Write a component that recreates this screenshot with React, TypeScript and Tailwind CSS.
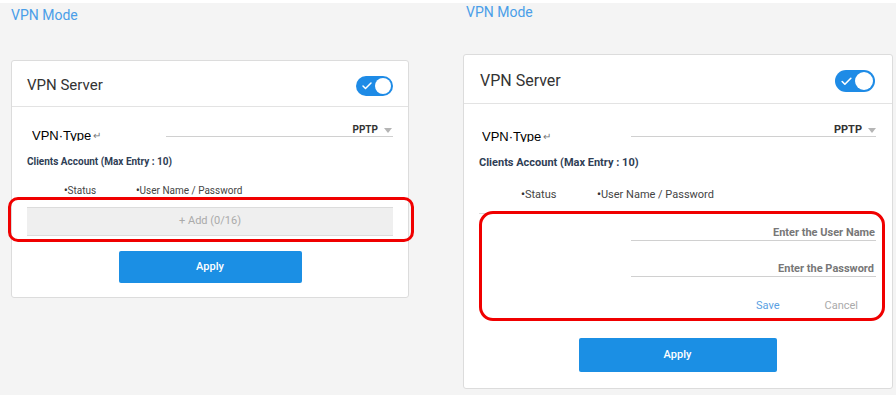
import { Check } from 'lucide-react';

// Toggle switch (on state)
function Toggle({ big }: { big?: boolean }) {
  return (
    <div
      className={`flex items-center justify-between rounded-full bg-[#1e8be6] p-[2px] ${
        big ? 'h-[22px] w-[40px]' : 'h-[20px] w-[37px]'
      }`}
    >
      <Check className={`text-white ${big ? 'ml-[3px] h-[13px] w-[13px]' : 'ml-[3px] h-[12px] w-[12px]'}`} strokeWidth={3} />
      <div className={`rounded-full bg-white ${big ? 'h-[18px] w-[18px]' : 'h-[16px] w-[16px]'}`} />
    </div>
  );
}

function TypeLabel({ className }: { className?: string }) {
  return (
    <div
      className={`flex h-[12px] items-start overflow-hidden text-[13px] leading-[13px] text-black ${className ?? ''}`}
      style={{ fontFamily: '"Liberation Sans", Arial, sans-serif' }}
    >
      VPN·Type<span className="ml-[2px] text-[10px] text-[#777]">↵</span>
    </div>
  );
}

function Caret() {
  return <div className="h-0 w-0 border-x-[4px] border-t-[5px] border-x-transparent border-t-[#b5b5b5]" />;
}

export default function App() {
  return (
    <div
      className="flex h-[395px] w-[896px] overflow-hidden bg-white pt-[3px]"
      style={{ fontFamily: 'Roboto, "Noto Sans", sans-serif' }}
    >
      {/* Left screenshot: collapsed list */}
      <div className="relative flex w-[450px] flex-col bg-[#f4f4f4] pl-[11px]">
        <div className="mt-[2px] text-[14px] leading-[20px] text-[#4a9ee8]">VPN Mode</div>

        <div className="mt-[35px] flex w-[398px] flex-col rounded-[3px] border border-[#dcdcdc] bg-white">
          <div className="flex h-[46px] items-center justify-between border-b border-[#e3e3e3] pl-[15px] pr-[15px] pt-[4px]">
            <span className="text-[15px] text-[#333]">VPN Server</span>
            <Toggle />
          </div>

          <div className="flex flex-col px-[15px] pb-[14px]">
            <div className="mt-[20px] flex h-[14px] items-start justify-between">
              <TypeLabel className="ml-[5px] mt-[2px]" />
              <div className="flex h-[10px] w-[227px] items-end justify-end gap-[6px] border-b border-[#d0d0d0] pr-[1px]">
                <span className="mb-[1px] text-[10px] font-bold leading-[10px] text-[#333]">PPTP</span>
                <div className="mb-[3px]">
                  <Caret />
                </div>
              </div>
            </div>

            <div className="mt-[15px] text-[10px] font-bold leading-[12px] text-[#2f3e55]">
              Clients Account (Max Entry : 10)
            </div>

            <div className="mt-[17px] flex pl-[37px] text-[10px] leading-[12px] text-[#444]">
              <span className="w-[72px]">
                <b className="text-[#333]">•</b>Status
              </span>
              <span>
                <b className="text-[#333]">•</b>User Name / Password
              </span>
            </div>

            <div className="mt-[10px] flex h-[29px] items-center justify-center border-y border-[#dcdcdc] bg-[#efefef] text-[11px] text-[#aaa]">
              + Add (0/16)
            </div>

            <button className="mt-[15px] h-[32px] w-[183px] self-center rounded-[2px] bg-[#1b8fe4] text-[11px] font-medium text-white">
              Apply
            </button>
          </div>
        </div>

        <div className="absolute left-[8px] top-[194px] h-[45px] w-[406px] rounded-[10px] border-[3px] border-[#f00000]" />
      </div>

      {/* Right screenshot: adding a user */}
      <div className="relative flex w-[446px] flex-col bg-[#f4f4f4] pl-[13px]">
        <div className="ml-[3px] mt-0 text-[14px] leading-[18px] text-[#4a9ee8]">VPN Mode</div>

        <div className="mt-[33px] flex w-[430px] flex-col rounded-[3px] border border-[#dcdcdc] bg-white">
          <div className="flex h-[49px] items-center justify-between border-b border-[#e3e3e3] pl-[16px] pr-[17px] pt-[4px]">
            <span className="text-[16px] text-[#333]">VPN Server</span>
            <Toggle big />
          </div>

          <div className="flex flex-col pb-[16px] pl-[15px] pr-[16px]">
            <div className="mt-[23px] flex h-[14px] items-start justify-between">
              <TypeLabel className="ml-[3px] mt-[3px]" />
              <div className="flex h-[10px] w-[245px] items-end justify-end gap-[6px] border-b border-[#d0d0d0]">
                <span className="mb-[1px] text-[11px] font-bold leading-[10px] text-[#333]">PPTP</span>
                <div className="mb-[3px]">
                  <Caret />
                </div>
              </div>
            </div>

            <div className="mt-[15px] text-[11px] font-bold leading-[13px] text-[#2f3e55]">
              Clients Account (Max Entry : 10)
            </div>

            <div className="mt-[19px] flex pl-[42px] text-[11px] leading-[13px] text-[#444]">
              <span className="w-[76px]">
                <b className="text-[#333]">•</b>Status
              </span>
              <span>
                <b className="text-[#333]">•</b>User Name / Password
              </span>
            </div>

            <div className="mt-[12px] flex flex-col border-t border-[#dcdcdc]">
              <div className="mt-[12px] h-[15px] w-[245px] self-end border-b border-[#d0d0d0] pr-[1px] text-right text-[11px] font-bold leading-[13px] text-[#777]">
                Enter the User Name
              </div>
              <div className="mt-[21px] h-[15px] w-[245px] self-end border-b border-[#d0d0d0] pr-[2px] text-right text-[11px] font-bold leading-[13px] text-[#777]">
                Enter the Password
              </div>
              <div className="mt-[22px] flex justify-end gap-[45px] pr-[18px] text-[11px] leading-[13px]">
                <span className="text-[#5a9fe3]">Save</span>
                <span className="text-[#aaa]">Cancel</span>
              </div>
            </div>

            <button className="mt-[26px] h-[34px] w-[198px] self-center rounded-[2px] bg-[#1b8fe4] text-[11px] font-medium text-white">
              Apply
            </button>
          </div>
        </div>

        <div className="absolute left-[29px] top-[208px] h-[110px] w-[406px] rounded-[14px] border-[3px] border-[#f00000]" />
      </div>
    </div>
  );
}
